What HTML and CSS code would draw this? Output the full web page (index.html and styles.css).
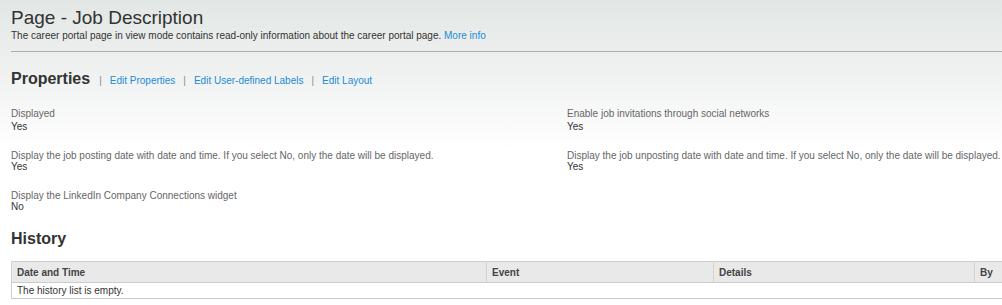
FILE: index.html
```html
<!DOCTYPE html>
<html lang="en">
<head>
  <meta charset="UTF-8">
  <meta name="viewport" content="width=device-width, initial-scale=1.0">
  <title>Page - Job Description</title>
  <link rel="stylesheet" href="styles.css">
</head>
<body>
  <div class="page-header">
    <h1>Page - Job Description</h1>
    <p class="description">The career portal page in view mode contains read-only information about the career portal page. <a href="#">More info</a></p>
  </div>

  <div class="section properties">
    <div class="section-title">
      <h2>Properties</h2>
      <span class="sep">|</span>
      <a href="#">Edit Properties</a>
      <span class="sep">|</span>
      <a href="#">Edit User-defined Labels</a>
      <span class="sep">|</span>
      <a href="#">Edit Layout</a>
    </div>

    <div class="fields">
      <div class="field first">
        <div class="label">Displayed</div>
        <div class="value">Yes</div>
      </div>
      <div class="field first">
        <div class="label">Enable job invitations through social networks</div>
        <div class="value">Yes</div>
      </div>
      <div class="field">
        <div class="label">Display the job posting date with date and time. If you select No, only the date will be displayed.</div>
        <div class="value">Yes</div>
      </div>
      <div class="field">
        <div class="label">Display the job unposting date with date and time. If you select No, only the date will be displayed.</div>
        <div class="value">Yes</div>
      </div>
      <div class="field">
        <div class="label">Display the LinkedIn Company Connections widget</div>
        <div class="value">No</div>
      </div>
    </div>
  </div>

  <div class="section history-section">
    <div class="section-title">
      <h2>History</h2>
    </div>
    <table class="history">
      <colgroup>
        <col class="col-date">
        <col class="col-event">
        <col class="col-details">
        <col class="col-by">
      </colgroup>
      <thead>
        <tr>
          <th>Date and Time</th>
          <th>Event</th>
          <th>Details</th>
          <th>By</th>
        </tr>
      </thead>
      <tbody>
        <tr>
          <td colspan="4">The history list is empty.</td>
        </tr>
      </tbody>
    </table>
  </div>
</body>
</html>
```

FILE: styles.css
```css
body {
  font-family: "Liberation Sans", Arial, sans-serif;
  font-size: 10px;
  color: #333;
  margin: 0;
  padding: 0 0 0 11px;
  overflow-x: hidden;
  background: #fff linear-gradient(to bottom, #e2e7e5 0, #eff1f0 70px, #fff 150px) no-repeat;
}
a {
  color: #1a8cd8;
  text-decoration: none;
}
.page-header {
  padding-top: 7px;
  padding-bottom: 9px;
  border-bottom: 1px solid #a9aeae;
}
h1 {
  font-size: 19px;
  font-weight: normal;
  line-height: 22px;
  margin: 0;
}
.description {
  margin: 0;
  line-height: 13px;
}
.properties {
  padding-top: 17px;
}
.history-section {
  padding-top: 17px;
}
.section-title {
  display: flex;
  align-items: baseline;
  line-height: 20px;
}
h2 {
  font-size: 16px;
  font-weight: bold;
  margin: 0;
  line-height: 20px;
}
.section-title h2 {
  margin-right: 9px;
}
.sep {
  color: #888;
  margin-right: 8px;
}
.section-title a + .sep {
  margin-left: 8px;
}
.fields {
  display: grid;
  grid-template-columns: 556px 1fr;
  row-gap: 18px;
  padding-top: 17px;
}
.label {
  color: #666;
  line-height: 11px;
}
.field.first .label {
  margin-bottom: 2px;
}
.value {
  line-height: 11px;
}
.history {
  margin-top: 12px;
  width: 1000px;
  table-layout: fixed;
  border-collapse: collapse;
  border: 1px solid #ccc;
}
.col-date { width: 475px; }
.col-event { width: 227px; }
.col-details { width: 261px; }
.history th {
  background-color: #e9e9e9;
  color: #444;
  font-weight: bold;
  text-align: left;
  line-height: 13px;
  padding: 4px 5px 3px;
  border-bottom: 1px solid #ccc;
  border-left: 1px solid #d4d4d4;
}
.history td {
  line-height: 13px;
  padding: 1px 5px;
}
```
